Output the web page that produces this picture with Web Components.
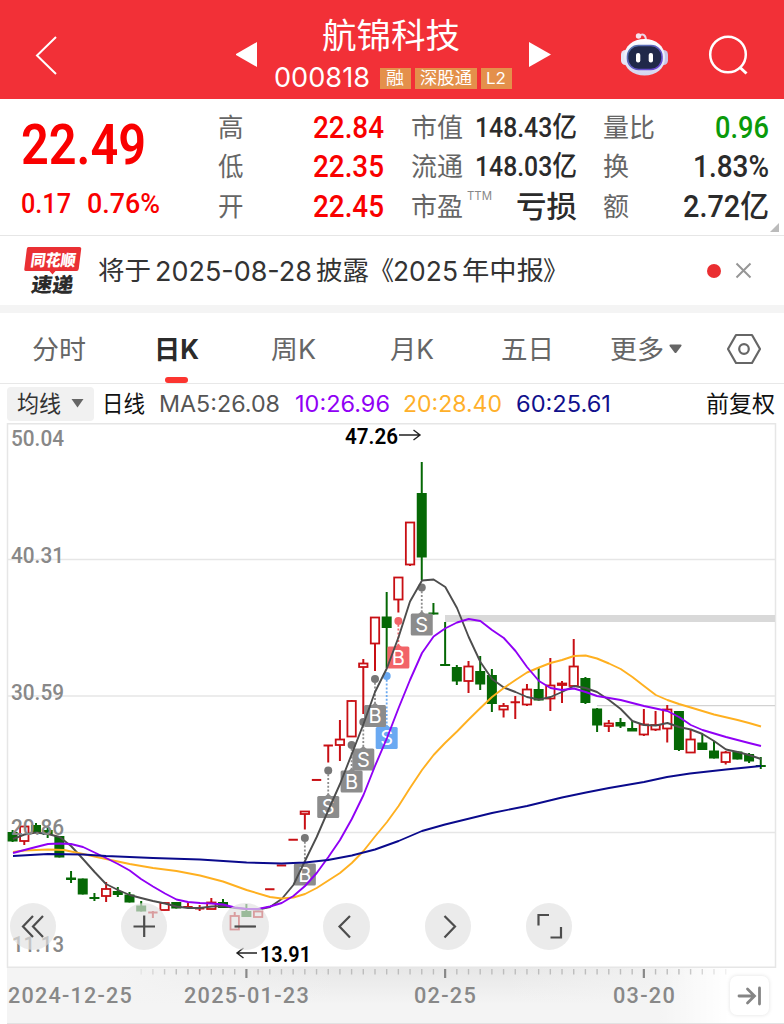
<!DOCTYPE html>
<html lang="zh-CN">
<head>
<meta charset="utf-8">
<title>航锦科技 000818</title>
<style>
  html, body {
    margin: 0;
    padding: 0;
  }

  body {
    width: 784px;
    height: 1024px;
    overflow: hidden;
    background: #fff;
    font-family: Inter, "Noto Sans CJK SC", sans-serif;
  }
</style>
</head>
<body>
<stock-page></stock-page>

<script>
// Single line of text squeezed or stretched to a given width (w attribute)
class FitText extends HTMLElement {
  constructor() {
    super();
    this.attachShadow({ mode: 'open' });
    this.shadowRoot.innerHTML = `
      <style>
        :host {
          display: block;
          flex: none;
          white-space: nowrap;
        }

        :host([num]) {
          font-family: Roboto, "Noto Sans CJK SC", sans-serif;
        }

        span {
          display: inline-block;
          transform-origin: 0 50%;
        }
      </style>
      <span><slot></slot></span>
    `;
  }

  connectedCallback() {
    const width = parseFloat(this.getAttribute('w'));
    const span = this.shadowRoot.querySelector('span');
    const natural = span.getBoundingClientRect().width;
    this.style.width = width + 'px';
    if (natural) {
      span.style.transform = `scaleX(${width / natural})`;
    }
  }
}

class StockHeader extends HTMLElement {
  constructor() {
    super();
    this.attachShadow({ mode: 'open' });
    this.shadowRoot.innerHTML = `
      <style>
        :host {
          display: flex;
          align-items: flex-start;
          height: 98.5px;
          background: #f23037;
          color: #fff;
        }

        svg {
          display: block;
          flex: none;
        }

        .back { margin: 35px 0 0 34px; }
        .prev { margin: 42px 0 0 177px; }
        .next { margin: 42px 0 0 18px; }
        .robot { margin: 30px 0 0 68px; }
        .search { margin: 34px 0 0 38px; }

        .center {
          flex: none;
          width: 237px;
          margin-left: 17px;
          display: flex;
          flex-direction: column;
        }

        .name {
          margin: 15px 0 0 48px;
          font-size: 34px;
          line-height: 42px;
        }

        .sub {
          display: flex;
          align-items: center;
          height: 22px;
          margin-top: 10px;
        }

        .code {
          font-size: 27px;
          line-height: 22px;
          margin-right: 10px;
        }

        .tag {
          display: flex;
          flex: none;
          justify-content: center;
          height: 21px;
          margin-right: 4px;
          background: #e4904b;
          font-size: 16.5px;
          line-height: 20px;
        }

        .tag:last-child { margin-right: 0; }
      </style>
      <svg class="back" width="25" height="41" viewBox="0 0 25 41" fill="none" stroke="#fff" stroke-width="2">
        <path d="M22 2L3 20.5L22 39"/>
      </svg>
      <svg class="prev" width="21" height="25" viewBox="0 0 21 25"><path d="M21 0V25L-1 12.5Z" fill="#fff"/></svg>
      <div class="center">
        <fit-text class="name" w="138">航锦科技</fit-text>
        <div class="sub">
          <fit-text class="code" w="96">000818</fit-text>
          <div class="tag" style="width:30.5px"><fit-text w="18">融</fit-text></div>
          <div class="tag" style="width:62px"><fit-text w="52">深股通</fit-text></div>
          <div class="tag" style="width:31px"><fit-text w="20">L2</fit-text></div>
        </div>
      </div>
      <svg class="next" width="23" height="25" viewBox="0 0 23 25"><path d="M0 0V25L22 12.5Z" fill="#fff"/></svg>
      <svg class="robot" width="50" height="48" viewBox="0 0 50 48">
        <defs>
          <linearGradient id="shell" x1="0" y1="0" x2="0" y2="1">
            <stop offset="0" stop-color="#fff"/>
            <stop offset=".6" stop-color="#e6e8fa"/>
            <stop offset="1" stop-color="#d3d5ee"/>
          </linearGradient>
          <linearGradient id="rim" x1="0" y1="0" x2="1" y2="1">
            <stop offset="0" stop-color="#5579a8"/>
            <stop offset="1" stop-color="#6b40d8"/>
          </linearGradient>
        </defs>
        <path d="M19 6C23 3 26 5 26 11" fill="none" stroke="#ead4e4" stroke-width="2"/>
        <circle cx="18.5" cy="6" r="2.7" fill="#f6e3ee"/>
        <rect x="1" y="20" width="9" height="15" rx="4.5" fill="#e4e4f5"/>
        <rect x="39" y="20" width="9" height="15" rx="4.5" fill="#c8c6e8"/>
        <path d="M24.5 9C36 9 45 16 45 27.500C45 39 36 45.5 24.5 45.5S4 39 4 27.500C4 16 13 9 24.5 9Z" fill="url(#shell)"/>
        <rect x="7.500" y="15.500" width="34.500" height="24" rx="11" fill="#202849" stroke="url(#rim)" stroke-width="1.600"/>
        <rect x="16" y="23" width="4.300" height="9.500" rx="2" fill="#fff"/>
        <rect x="28.700" y="23" width="4.300" height="9.500" rx="2" fill="#fff"/>
      </svg>
      <svg class="search" width="42" height="42" viewBox="0 0 42 42" fill="none" stroke="#fff" stroke-width="2.5">
        <circle cx="20" cy="20.5" r="17.8"/>
        <path d="M31.500 33L38.500 39.5" stroke-width="3"/>
      </svg>
    `;
  }
}

class QuotePanel extends HTMLElement {
  constructor() {
    super();
    this.attachShadow({ mode: 'open' });
    const columns = [
      [['高', 25.5, '22.84', 71, 'up'], ['低', 25.5, '22.35', 71, 'up'], ['开', 25.5, '22.45', 71, 'up']],
      [['市值', 52, '148.43亿', 102, 'mid'], ['流通', 52, '148.03亿', 102, 'mid'], ['市盈', 52, '亏损', 61, 'cn']],
      [['量比', 52, '0.96', 54, 'down'], ['换', 26, '1.83%', 76, ''], ['额', 26, '2.72亿', 86, '']]
    ];
    this.shadowRoot.innerHTML = `
      <style>
        :host {
          display: flex;
          position: relative;
          box-sizing: border-box;
          height: 137.5px;
          padding-left: 21px;
          border-bottom: 1px solid #e6e6e6;
        }

        .price {
          flex: none;
          width: 197px;
          color: #f90000;
          font-weight: 500;
        }

        .last {
          font-size: 56px;
          line-height: 60px;
          margin-top: 16px;
          font-weight: 600;
        }

        .change {
          display: flex;
          gap: 16px;
          margin-top: 15px;
          font-size: 28px;
          line-height: 28px;
        }

        .column {
          flex: none;
          width: 166px;
          margin: 10px 26.5px 0 0;
        }

        .column:last-of-type { margin-right: 0; }

        .row {
          display: flex;
          justify-content: space-between;
          height: 39.5px;
          line-height: 37px;
        }

        .label {
          display: flex;
          color: #666;
          font-size: 26px;
          line-height: 38px;
        }

        .value {
          color: #2b2b2b;
          font-size: 31px;
          font-weight: 500;
        }

        .value.mid { font-size: 28px; }
        .value.cn { font-size: 30px; }
        .value.up { color: #f90000; }
        .value.down { color: #0a9a0a; }

        .ttm {
          font-size: 12px;
          line-height: 15px;
          margin-left: 4px;
          color: #888;
        }

        .corner {
          position: absolute;
          right: 5px;
          bottom: 3px;
        }
      </style>
      <div class="price">
        <fit-text num class="last" w="125">22.49</fit-text>
        <div class="change">
          <fit-text num w="50">0.17</fit-text>
          <fit-text num w="73">0.76%</fit-text>
        </div>
      </div>
      ${columns.map((rows) => `
        <div class="column">
          ${rows.map(([label, lw, value, vw, cls]) => `
            <div class="row">
              <div class="label">
                <fit-text w="${lw}">${label}</fit-text>
                ${label === '市盈' ? '<fit-text class="ttm" w="25">TTM</fit-text>' : ''}
              </div>
              <fit-text num class="value ${cls}" w="${vw}">${value}</fit-text>
            </div>
          `).join('')}
        </div>
      `).join('')}
      <svg class="corner" width="9" height="9"><path d="M9 0V9H0Z" fill="#bbb"/></svg>
    `;
  }
}

class NewsBar extends HTMLElement {
  constructor() {
    super();
    this.attachShadow({ mode: 'open' });
    this.shadowRoot.innerHTML = `
      <style>
        :host {
          display: flex;
          align-items: center;
          box-sizing: border-box;
          height: 77px;
          padding: 0 32px 0 24px;
          border-bottom: 8px solid #f4f4f4;
        }

        .logo { margin-right: 16px; }

        .text {
          display: flex;
          align-items: center;
          color: #333;
          font-size: 26px;
          line-height: 36px;
        }

        .date { font-size: 26.5px; }

        .dot {
          width: 14px;
          height: 14px;
          margin-left: auto;
          margin-right: 14px;
          border-radius: 50%;
          background: #ea2e31;
        }
      </style>
      <svg class="logo" width="58" height="52" viewBox="24 245 58 52" font-family="Noto Sans CJK SC" font-weight="900">
        <path d="M28.5 247H79.5Q81.5 247 81.2 249L78.8 268.5Q78.5 271 76.5 271H55.5L52.5 274.5L49.5 271H26Q24 271 24.3 269L26.8 249Q27 247 28.5 247Z" fill="#ea3034"/>
        <text transform="translate(30 265.5) skewX(-8)" font-size="16" textLength="45" lengthAdjust="spacingAndGlyphs" fill="#fff">同花顺</text>
        <text transform="translate(30.5 291.5) skewX(-8)" font-size="20" textLength="42" lengthAdjust="spacingAndGlyphs" fill="#2b2b2b">速递</text>
      </svg>
      <div class="text">
        <fit-text w="53">将于</fit-text>
        <fit-text class="date" w="157" style="margin-left:4px">2025-08-28</fit-text>
        <fit-text w="53" style="margin-left:4px">披露</fit-text>
        <fit-text w="25">《</fit-text>
        <fit-text class="date" w="65" style="margin-left:-1px">2025</fit-text>
        <fit-text w="82" style="margin-left:4px">年中报</fit-text>
        <fit-text w="25" style="margin-left:-1px">》</fit-text>
      </div>
      <div class="dot"></div>
      <svg width="17" height="17" viewBox="0 0 17 17" fill="none" stroke="#969696" stroke-width="2">
        <path d="M1.5 1.5L15.5 15.5M15.5 1.5L1.5 15.5"/>
      </svg>
    `;
  }
}

class PeriodTabs extends HTMLElement {
  constructor() {
    super();
    this.attachShadow({ mode: 'open' });
    this.shadowRoot.innerHTML = `
      <style>
        :host {
          display: flex;
          box-sizing: border-box;
          height: 71px;
          padding-left: 32px;
          border-bottom: 1px solid #e8e8e8;
          color: #666;
          font-size: 26.5px;
          line-height: 73px;
        }

        .active {
          position: relative;
          color: #2b2b2b;
          font-weight: 700;
        }

        .active::after {
          content: "";
          position: absolute;
          left: 11px;
          top: 64px;
          width: 23px;
          height: 5.5px;
          border-radius: 3px;
          background: #fc3530;
        }

        .arrow { margin: 31px 0 0 5px; }
        .settings { margin: 20px 0 0 44px; }
        svg { flex: none; }
      </style>
      <fit-text w="54">分时</fit-text>
      <fit-text class="active" style="margin-left:68px" w="45">日K</fit-text>
      <fit-text style="margin-left:72px" w="45">周K</fit-text>
      <fit-text style="margin-left:74px" w="44">月K</fit-text>
      <fit-text style="margin-left:67px" w="53">五日</fit-text>
      <fit-text style="margin-left:56px" w="54">更多</fit-text>
      <svg class="arrow" width="13" height="10" viewBox="0 0 13 10"><path d="M1.5 .5H11.5Q13.2 .8 12.2 2.2L7.5 8.5Q6.5 9.5 5.5 8.5L.8 2.2Q-.2 .8 1.5 .5Z" fill="#666"/></svg>
      <svg class="settings" width="36" height="32" viewBox="0 0 36 32" fill="none" stroke="#666" stroke-width="2.2">
        <path d="M10 2H26L34 16L26 30H10L2 16Z" stroke-linejoin="round"/>
        <circle cx="18" cy="16" r="4.8"/>
      </svg>
    `;
  }
}

class MaLegend extends HTMLElement {
  constructor() {
    super();
    this.attachShadow({ mode: 'open' });
    this.shadowRoot.innerHTML = `
      <style>
        :host {
          display: flex;
          align-items: center;
          height: 39px;
          padding: 0 9px 0 7px;
          color: #111;
          font-size: 22.5px;
          line-height: 34px;
        }

        .select {
          display: flex;
          align-items: center;
          box-sizing: border-box;
          width: 87px;
          height: 34px;
          padding-left: 10px;
          margin-right: 8px;
          border-radius: 4px;
          background: #f1f1f1;
          color: #333;
        }

        .select svg { margin-left: 10px; }
        .adjust { margin-left: auto; }
      </style>
      <div class="select">
        <fit-text w="44">均线</fit-text>
        <svg width="13" height="9"><path d="M.5 0H12.5L6.5 8.5Z" fill="#666"/></svg>
      </div>
      <fit-text w="43">日线</fit-text>
      <fit-text style="color:#555;margin-left:14px" w="121">MA5:26.08</fit-text>
      <fit-text style="color:#9000f5;margin-left:15px" w="95">10:26.96</fit-text>
      <fit-text style="color:#ffb02a;margin-left:13px" w="99">20:28.40</fit-text>
      <fit-text style="color:#10108c;margin-left:14px" w="95">60:25.61</fit-text>
      <fit-text class="adjust" w="69">前复权</fit-text>
    `;
  }
}

// x position of the n-th candle
const STEP = 11.69;
const candleX = (n) => 12.6 + n * STEP;

// [colour, high, low, body top, body bottom]
const CANDLES = [
  ['g', 830, 842, 832, 841.5], ['r', 826, 845, 826.5, 841], ['g', 823, 832, 825, 832], ['g', 827, 838, 830, 835],
  ['g', 836, 857.5, 836, 857.5], ['g', 871, 883, 877.5, 880], ['g', 878.5, 894.5, 878.5, 894.5], ['g', 893, 901, 897, 899],
  ['r', 882, 902, 889, 896], ['g', 887, 897, 891, 895], ['g', 892, 902.5, 894.5, 902.5], ['g', 901, 911.5, 905.5, 911.5],
  ['r', 911, 918, 912, 913], ['r', 902, 910.5, 903, 910], ['g', 902, 908.5, 902, 908.5], ['r', 903, 908, 906.5, 907.5],
  ['r', 905, 911, 908, 909], ['r', 898, 909, 902.5, 909], ['g', 899, 908, 902, 908], ['r', 912, 930, 916, 929.5],
  ['g', 904, 917, 911, 917], ['r', 911, 917, 911.5, 917], ['r', 889, 889, 889, 889.5], ['r', 865, 865, 865.2, 865.7],
  ['r', 839, 839, 839.5, 840], ['r', 811, 829.5, 811.5, 814], ['r', 780, 780, 779.7, 780.2], ['r', 745, 762.5, 745, 746],
  ['r', 720, 761, 739.5, 745], ['r', 700, 737, 701, 736.5], ['r', 659, 714, 663.5, 667], ['r', 617, 671, 617.5, 643.5],
  ['g', 592, 668, 616.5, 628], ['r', 577, 612.5, 577.5, 599.5], ['r', 522, 566, 522.5, 564.5], ['g', 462, 580, 493, 557.5],
  ['g', 603, 614.5, 612.5, 614.5], ['g', 622, 665.5, 664, 666], ['g', 665, 685, 667, 681.5], ['r', 661, 693, 666.5, 681],
  ['g', 656, 690, 671, 684.5], ['g', 669, 712, 675, 704], ['r', 703, 717.5, 706, 709.5], ['r', 696, 719, 702, 702.5],
  ['r', 684, 706, 689.5, 704.5], ['g', 668, 700.5, 689, 700.5], ['r', 658, 711, 685.5, 698.5], ['r', 681, 703, 683.5, 685],
  ['r', 639, 687, 666.5, 686], ['g', 677, 704, 678, 703], ['g', 708, 732, 708.5, 725.5], ['r', 720, 732, 723.5, 726],
  ['g', 718, 728, 722, 726.5], ['g', 721, 731, 728, 731.5], ['r', 709, 736, 724.5, 734.5], ['r', 711, 731, 725, 729.5],
  ['r', 705, 742.5, 709.5, 728.5], ['g', 711, 751, 711, 750], ['r', 729, 753, 739.5, 752.5], ['g', 734, 750, 742.5, 750],
  ['g', 741, 758.5, 750.5, 758.5], ['r', 751, 764.5, 752.5, 762], ['g', 751, 759.5, 751.5, 759.5], ['g', 753, 763, 754, 761.5],
  ['g', 757, 769, 765, 767]
];

const MA_LINES = [
  ['#4d4d4d', '13,839 24.5,834.5 36,832.5 48,834 59.6,837 71,846 83,859 94.6,872 106,884 118,890 129.7,895 141,898 153,901 165,903.5 176.5,906.5 188,908 200,908 211.5,906.5 223,906 235,908 246.6,909 258.3,909.5 270,907 281.7,899 293.4,885 305,861 316.7,837 328.4,810 340,784 351.8,754 363.5,724 375,692 387,668 398.6,637 410,601.5 422,580.5 433.6,579.5 445.3,587 457,608 468.7,637 480.4,662 492,679 503.8,687.5 515.5,692 527,697 539,699.5 550.5,697 562,692 574,686 585.6,688 597,692 609,700 620.7,709 632.4,721 644,725 655.8,725.5 667.4,723 679,727 690.8,729.5 702.5,734 714,741 726,749.5 737.6,752 749,755 761,759'],
  ['#ffb020', '13,852 24.5,850.5 48,849.5 64,850 83,854 106,859 129.7,864 153,868 176.5,871 200,875.5 223,881.5 246.6,890 270,897 281.7,898.5 293.4,897.5 305,894 316.7,888 340,873 351.8,863 363.5,851 375,836.5 387,822 398.6,806 410,788 422,770 433.6,755 445,743 457,731.5 468.7,719.5 480.4,708 492,697 503.8,688 515.5,680 527,672.5 539,667.5 550.5,663 562,660 574,656 585.6,655.5 597,658.5 609,663.5 620.7,669 632.4,677 644,686 655.8,695 667.4,700 679,704 690.8,707.5 714,714.5 737.6,720 749,723 761,726.5'],
  ['#9000f5', '13,853 24.5,850 36,847 48,844 59.6,843.5 71,844 83,847 94.6,852.5 106,858 118,864 129.7,870.5 141,879 153,886.5 165,893.5 176.5,899.5 188,902 200,903 211.5,903.5 223,904.5 235,907.5 246.6,909 258,909 270,906.5 281.7,903 293.4,896 305,886 316.7,873 328.4,857 340,840 351.8,819 363.5,795 375,766 387,738 398.6,708 410,680 422,653 433.6,636.5 445,628.5 457,622.5 468.7,619 480.4,621 492,630 503.8,638 515.5,651 527,667 539,681 550.5,688 562,690 574,688.5 585.6,692 597,696 609,698 620.7,700 644,706 667.4,711 679,717 690.8,725 702.5,730 726,737 749,743 761,746'],
  ['#0a0a8c', '13,856 48,854 83,854.5 106,856 153,858 200,859.5 246.6,862.5 281.7,863.5 305,862.5 328,860 351.8,855.5 375,849.5 398.6,841 422,831 445,824.5 492,813 527,806 562,797.5 586,792.5 609,788 644,782 667,777 690,773.5 726,769.5 761,766']
];

// [letter, candle index, box centre y, dot y, colour]
const TRADES = [
  ['B', 25, 874.5, 838, '#8c8c8c'], ['S', 27, 807, 770.5, '#8c8c8c'], ['B', 29, 781.5, 745, '#8c8c8c'],
  ['S', 30, 759.5, 722, '#8c8c8c'], ['S', 32, 738, 676, '#6aa9f2'], ['B', 31, 716, 679, '#8c8c8c'],
  ['B', 33, 657.5, 621, '#f26468'], ['S', 35, 624.5, 587.5, '#8c8c8c']
];

class KlineChart extends HTMLElement {
  constructor() {
    super();
    this.attachShadow({ mode: 'open' });
    this.shadowRoot.innerHTML = `
      <style>
        :host {
          display: block;
          position: relative;
          height: 545px;
        }

        svg { display: block; }

        .chart text { font-family: Roboto, sans-serif; }
        .chart .trade { font-family: Inter, sans-serif; }

        .controls {
          position: absolute;
          left: 9.5px;
          bottom: 18.5px;
          display: flex;
          gap: 54.8px;
        }

        .controls > div {
          width: 46.5px;
          height: 46.5px;
          border-radius: 50%;
          background: rgba(226, 226, 226, 0.68);
        }

        .controls > div:first-child { margin-right: 10px; }

        .controls path {
          fill: none;
          stroke: #4d4d4d;
          stroke-width: 2.2;
        }
      </style>
      <svg class="chart" width="784" height="545" viewBox="0 423 784 545">
        <g stroke="#e6e6e6" stroke-width="1.3">
          <path d="M8 559.5H775M8 696H775M8 832.5H775"/>
          <path d="M7.5 423.7H775.5V967.3H7.5Z" fill="none" stroke-width="1.5"/>
        </g>
        <path d="M445 618.5H775" stroke="#d9d9d9" stroke-width="7"/>
        <path d="M597 705.7H775" stroke="#d2d2d2" stroke-width="1.3"/>
        ${this.drawCandles()}
        ${this.drawTrades()}
        ${MA_LINES.map(([color, points]) => `<polyline points="${points}" fill="none" stroke="${color}" stroke-width="1.9" stroke-linejoin="round"/>`).join('')}
        <g font-size="22" font-weight="500" fill="#888">
          <text x="11" y="446" textLength="53" lengthAdjust="spacingAndGlyphs">50.04</text>
          <text x="11" y="563" textLength="53" lengthAdjust="spacingAndGlyphs">40.31</text>
          <text x="11" y="699.5" textLength="53" lengthAdjust="spacingAndGlyphs">30.59</text>
          <text x="11" y="835" textLength="53" lengthAdjust="spacingAndGlyphs">20.86</text>
          <text x="12" y="952" textLength="52" lengthAdjust="spacingAndGlyphs">11.13</text>
        </g>
        <g font-size="22" font-weight="600" fill="#000">
          <text x="345" y="443.5" textLength="53" lengthAdjust="spacingAndGlyphs">47.26</text>
          <text x="260" y="961.5" textLength="51" lengthAdjust="spacingAndGlyphs">13.91</text>
        </g>
        <path d="M399 435H420M413.5 430L420 435L413.5 440M257 953H237M243.5 948L237 953L243.5 958" fill="none" stroke="#222" stroke-width="1.4"/>
      </svg>
      <div class="controls">
        <div><svg width="46" height="46"><path d="M23 13L13 23.5L23 34M33 13L23 23.5L33 34"/></svg></div>
        <div><svg width="46" height="46"><path d="M12.5 23.5H34M23.2 12.5V34"/></svg></div>
        <div><svg width="46" height="46"><path d="M12.5 23.5H34"/></svg></div>
        <div><svg width="46" height="46"><path d="M27 13L16.5 23.5L27 34.5"/></svg></div>
        <div><svg width="46" height="46"><path d="M19.5 13L30 23.5L19.5 34.5"/></svg></div>
        <div><svg width="46" height="46"><path d="M12.5 22.5V12H23M24.5 34.5H35V24"/></svg></div>
      </div>
    `;
  }

  drawCandles() {
    return CANDLES.map(([type, high, low, top, bottom], i) => {
      const x = candleX(i);
      const color = type === 'g' ? '#056805' : '#c80f14';
      let body;
      if (type === 'g') {
        body = `<rect x="${x - 5}" y="${top}" width="10" height="${bottom - top}" fill="${color}"/>`;
      } else if (bottom - top <= 1) {
        body = `<path d="M${x - 4.7} ${(top + bottom) / 2}h9.4" stroke="${color}" stroke-width="2"/>`;
      } else {
        body = `<rect x="${x - 4.2}" y="${top}" width="8.4" height="${bottom - top}" fill="#fff" stroke="${color}" stroke-width="1.8"/>`;
      }
      return `<path d="M${x} ${high}V${low}" stroke="${color}" stroke-width="2"/>${body}`;
    }).join('');
  }

  drawTrades() {
    return TRADES.map(([letter, i, y, dot, color]) => {
      const x = candleX(i);
      return `
        <path d="M${x} ${dot}V${y - 10}" stroke="${color}" stroke-width="1.8" stroke-dasharray="2 1.8"/>
        <circle cx="${x}" cy="${dot}" r="4" fill="${color === '#8c8c8c' ? '#777' : color}"/>
        <path d="M${x - 3.5} ${y - 10.5}l3.5 -3l3.5 3Z" fill="${color}"/>
        <rect x="${x - 11}" y="${y - 11}" width="22" height="22" rx="1.5" fill="${color}"/>
        <text class="trade" x="${x}" y="${y + 7.3}" font-size="20" text-anchor="middle" fill="#fff">${letter}</text>
      `;
    }).join('');
  }
}

class TimeAxis extends HTMLElement {
  constructor() {
    super();
    this.attachShadow({ mode: 'open' });
    const majors = [20, 37, 54];
    let ticks = '';
    for (let i = 11; i <= 61; i++) {
      const major = majors.includes(i);
      const x = candleX(i) - 7;
      const fade = i < 14 ? (i - 10) / 4 : i > 57 ? (62 - i) / 5 : 1;
      ticks += `<path d="M${x} 1V${major ? 10 : 6.5}" stroke="${major ? '#888' : '#bdbdbd'}" stroke-width="${major ? 2.2 : 1.4}" opacity="${fade}"/>`;
    }
    this.shadowRoot.innerHTML = `
      <style>
        :host {
          display: block;
          box-sizing: border-box;
          height: 56px;
          margin-left: 7px;
          border-bottom: 1px solid #e2e2e2;
          background:
            linear-gradient(90deg, rgba(255, 255, 255, 0) 650px, #fff 722px),
            linear-gradient(90deg, #f4f4f4 110px, rgba(244, 244, 244, 0) 330px, rgba(244, 244, 244, 0) 500px, #f4f4f4 700px),
            linear-gradient(#e7e7e7, #f4f4f4 36px);
        }

        .ticks {
          display: block;
          height: 12px;
        }

        .dates {
          display: flex;
          color: #888;
          font-size: 22.5px;
          font-weight: 500;
          line-height: 30px;
          letter-spacing: 1.3px;
        }

        .latest {
          display: flex;
          flex: none;
          align-items: center;
          justify-content: center;
          width: 39px;
          height: 39px;
          margin: -4px 0 0 54px;
          border-radius: 7px;
          background: #fff;
          box-shadow: 0 0 4px rgba(0, 0, 0, 0.12);
        }
      </style>
      <svg class="ticks" width="768" height="12">${ticks}</svg>
      <div class="dates">
        <fit-text num style="margin-left:1px" w="125">2024-12-25</fit-text>
        <fit-text num style="margin-left:51px" w="126">2025-01-23</fit-text>
        <fit-text num style="margin-left:104px" w="63">02-25</fit-text>
        <fit-text num style="margin-left:136px" w="63">03-20</fit-text>
        <div class="latest">
          <svg width="25" height="20" viewBox="0 0 25 20" fill="none" stroke="#858585" stroke-width="2.8" stroke-linecap="round">
            <path d="M2 10H17M10.5 3L17.5 10L10.5 17M22.5 2V18"/>
          </svg>
        </div>
      </div>
    `;
  }
}

class StockPage extends HTMLElement {
  constructor() {
    super();
    this.attachShadow({ mode: 'open' });
    this.shadowRoot.innerHTML = `
      <style>
        :host {
          display: flex;
          flex-direction: column;
          width: 784px;
          height: 1024px;
          background: #fff;
        }

        :host > * { flex: none; }
      </style>
      <stock-header></stock-header>
      <quote-panel></quote-panel>
      <news-bar></news-bar>
      <period-tabs></period-tabs>
      <ma-legend></ma-legend>
      <kline-chart></kline-chart>
      <time-axis></time-axis>
    `;
  }
}

customElements.define('stock-header', StockHeader);
customElements.define('quote-panel', QuotePanel);
customElements.define('news-bar', NewsBar);
customElements.define('period-tabs', PeriodTabs);
customElements.define('ma-legend', MaLegend);
customElements.define('kline-chart', KlineChart);
customElements.define('time-axis', TimeAxis);
customElements.define('stock-page', StockPage);
// Registered last so the text is in the page when it gets measured
customElements.define('fit-text', FitText);
</script>
</body>
</html>
